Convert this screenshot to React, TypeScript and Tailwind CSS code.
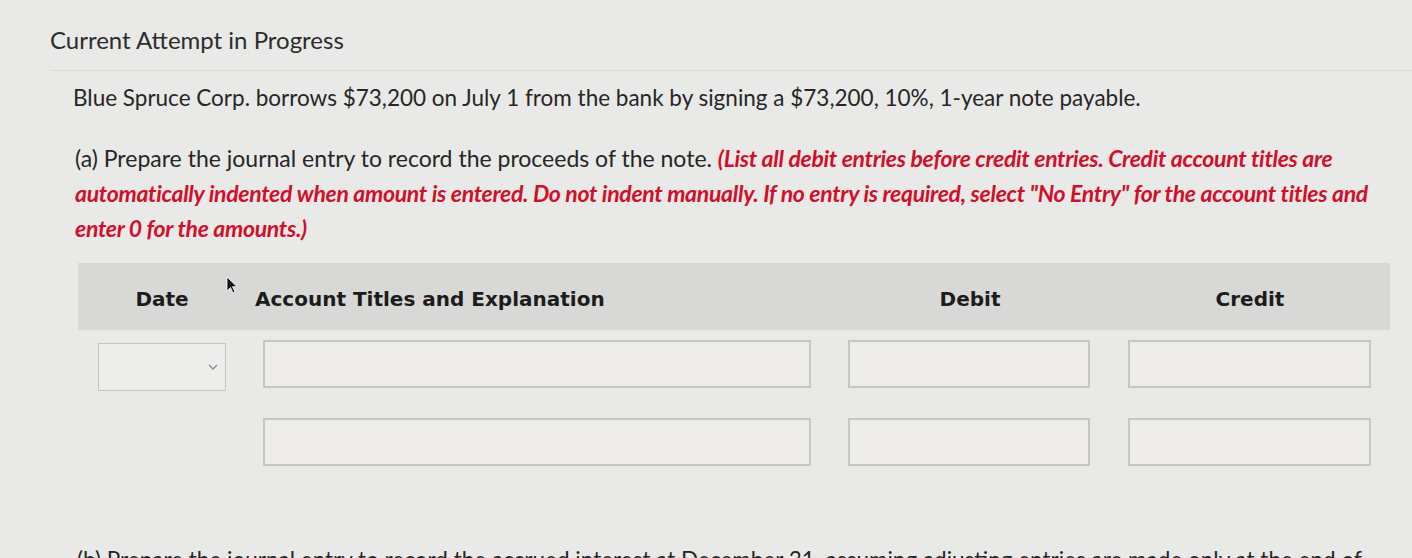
import React from 'react';

const lato = { fontFamily: 'Lato, "Open Sans", sans-serif' };

// one empty journal row; only the first row has the date picker
function EntryRow({ withDate }: { withDate?: boolean }) {
  return (
    <div className="grid grid-cols-[168px_584px_280px_280px] items-center">
      <div className="px-[20px]">
        {withDate && (
          <div className="mt-[6px] h-[48px] border border-[#c4c4c2] bg-[#ededeb] flex items-center justify-end pr-[6px]">
            <svg width="12" height="8" viewBox="0 0 12 8" fill="none" stroke="#8a8a8a" strokeWidth="1.3">
              <path d="M2 2l4 4 4-4" />
            </svg>
          </div>
        )}
      </div>
      <div className="pl-[17px] pr-[19px]">
        <div className="h-[48px] border-2 border-[#c6c6c4] bg-[#edeceb]" />
      </div>
      <div className="pl-[18px] pr-[20px]">
        <div className="h-[48px] border-2 border-[#c6c6c4] bg-[#edeceb]" />
      </div>
      <div className="pl-[18px] pr-[19px]">
        <div className="h-[48px] border-2 border-[#c6c6c4] bg-[#edeceb]" />
      </div>
    </div>
  );
}

export default function App() {
  return (
    <div className="relative w-[1412px] h-[558px] overflow-hidden bg-[#e9e9e7] text-[#262626]" style={lato}>
      <div className="pl-[50px] pt-[26px]">
        <h2 className="text-[24px] leading-[28px] text-[#2c2c2c]">Current Attempt in Progress</h2>
        <div className="mt-[16px] h-px bg-[#dadad8]" />
      </div>

      <div className="pl-[73px] pr-[20px]">
        <p className="mt-[13px] text-[22.5px] leading-[28px]">
          Blue Spruce Corp. borrows $73,200 on July 1 from the bank by signing a $73,200, 10%, 1-year note payable.
        </p>

        <p className="mt-[29px] pl-[2px] text-[23px] leading-[35px] whitespace-nowrap">
          (a) Prepare the journal entry to record the proceeds of the note.{' '}
          <span className="font-bold italic text-[#d0102b] tracking-[-0.3px]">
            (List all debit entries before credit entries. Credit account titles are
            <br />
            automatically indented when amount is entered. Do not indent manually. If no entry is required, select "No Entry" for the account titles and
            <br />
            enter 0 for the amounts.)
          </span>
        </p>
      </div>

      <div className="ml-[78px] mt-[17px] w-[1312px]">
        <div
          className="grid grid-cols-[168px_584px_280px_280px] items-center h-[67px] pt-[5px] bg-[#d8d8d6] text-[20px] font-bold text-[#1c1c1c]"
          style={{ fontFamily: '"DejaVu Sans", Verdana, sans-serif' }}
        >
          <div className="text-center">Date</div>
          <div className="pl-[9px]">Account Titles and Explanation</div>
          <div className="text-center">Debit</div>
          <div className="text-center">Credit</div>
        </div>

        <div className="pt-[7px] flex flex-col gap-[27px]">
          <EntryRow withDate />
          <EntryRow />
        </div>
      </div>

      <p className="mt-[80px] pl-[77px] text-[22.5px] leading-[28px] whitespace-nowrap">
        (b) Prepare the journal entry to record the accrued interest at December 31, assuming adjusting entries are made only at the end of
      </p>

      {/* mouse pointer */}
      <svg className="absolute left-[226px] top-[276px]" width="12" height="18" viewBox="0 0 12 18">
        <path d="M1 1v14l3.5-3.5 2.5 5.5 2-1-2.5-5.3H11z" fill="#111" stroke="#fff" strokeWidth="0.8" />
      </svg>
    </div>
  );
}
